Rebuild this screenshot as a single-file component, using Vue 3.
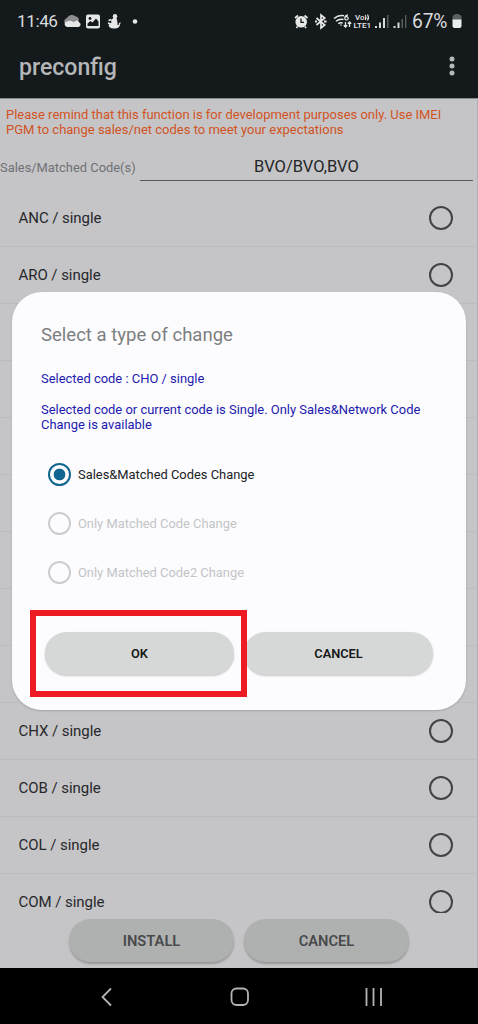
<script setup>
const topRows = ['ANC / single', 'ARO / single']
const bottomRows = ['CHX / single', 'COB / single', 'COL / single', 'COM / single']
const rows = [...topRows, ...Array(7).fill(''), ...bottomRows]
const options = [
  { label: 'Sales&Matched Codes Change', selected: true },
  { label: 'Only Matched Code Change', selected: false },
  { label: 'Only Matched Code2 Change', selected: false },
]
</script>

<template>
  <div class="phone">
    <header class="top">
      <div class="status">
        <span class="clock">11:46</span>
        <svg class="left-icons" width="80" height="20" viewBox="0 0 80 20">
          <path d="M1.500 13a4 4 0 0 1 2.500-5a5.500 5 0 0 1 9-1.500a4 4 0 0 1 3 4l-9 2.500z" fill="#8c8f90" />
          <path d="M4 17a3 3 0 0 1-1.500-5L7 10.500l3.500 1.500 3-1.500a3 3 0 0 1 2.800 2a2.400 2.400 0 0 1-.8 4.500z" fill="#e6e8e8" />
          <rect x="23" y="4.500" width="14" height="14" rx="2" fill="#e6e8e8" />
          <circle cx="27" cy="8.500" r="1.400" fill="#14191c" />
          <path d="M24.500 16v-2.500l3-2.500 2 1.500 3.500-4 2.500 3V16z" fill="#14191c" />
          <circle cx="52" cy="6.300" r="2.200" fill="#e6e8e8" />
          <path d="M50.500 8c-2 1-3 3-2 4.500l-3 2.500c.5 2.800 3 3.800 6 3.500c3 0 5.300-1 5.500-4.200l1-1.800-2.200.5.300 1.600-1.600.4c.2-3-.5-5-1-7z" fill="#e6e8e8" />
          <path d="M45.500 10.500l3-1M45 13l3 1" stroke="#e6e8e8" stroke-width="1.800" />
          <circle cx="72" cy="11.500" r="2.300" fill="#e6e8e8" />
        </svg>
        <svg class="right-icons" width="118" height="20" viewBox="294 10 118 20">
          <g fill="none" stroke="#e6e8e8">
            <circle cx="301.200" cy="21.800" r="5.800" fill="#e6e8e8" stroke="none" />
            <path d="M295 18l3-2.500M304.500 15.500l3 2.500M297.500 26.500l-1 1.500M305 26.500l1 1.500" stroke-width="1.700" />
            <path d="M301 18.500v3.800h3" stroke="#14191c" stroke-width="1.300" />
            <path d="M316.500 18l8.200 7-3.700 3V15l3.700 3-8.200 7" stroke-width="1.700" />
            <path d="M315 21.500h2M324 21.500h2.600" stroke-width="2" />
            <path d="M334 18.500c3.500-3 7-3.500 10-2.700M336 21.300c2.500-2.200 5-2.500 7.500-1.800M338.300 23.700c1.500-1.300 3-1.300 4.500-.6" stroke-width="1.500" />
            <circle cx="341" cy="25" r=".8" fill="#e6e8e8" stroke="none" />
            <path d="M348 14.800c-2.300.3-3.200 1.500-3.200 3.300a1.700 1.700 0 1 0 .5-1" stroke-width="1.200" />
            <path d="M345.500 22v5M343.800 25.300l1.700 1.700 1.700-1.700M349.500 27v-5M347.800 23.700l1.700-1.700 1.700 1.700" stroke-width="1.300" />
            <path d="M365.300 15q1.500 2.500 0 5M367.500 14.500q2 3 0 6" stroke-width="1.100" />
          </g>
          <g class="net" fill="#e6e8e8">
            <text x="355" y="20" textLength="9.500" lengthAdjust="spacingAndGlyphs" font-size="7.500">Vo</text>
            <text x="353.600" y="28.300" textLength="17.500" lengthAdjust="spacingAndGlyphs" font-size="7.500">LTE1</text>
          </g>
          <g fill="#d7dada">
            <path d="M375 26h2v2h-2zM379 22.500h2v5.500h-2zM383 18h2v10h-2z" />
            <path d="M387 15h1.500v13H387zM401.500 19h1.500v9h-1.500zM405 15h1.300v13h-1.300z" fill="#5a5e60" />
            <path d="M393.500 26h2v2h-2zM397.500 22.500h2v5.500h-2z" />
          </g>
        </svg>
        <span class="percent">67%</span>
        <svg class="battery" width="10" height="16" viewBox="0 0 10 16">
          <path d="M3 1h4v1h1a1.500 1.500 0 0 1 1.500 1.500V7H.5V3.500A1.500 1.500 0 0 1 2 2h1z" fill="#5b6062" />
          <path d="M.5 6.500h9V13A2 2 0 0 1 7.500 15h-5A2 2 0 0 1 .5 13z" fill="#eceeee" />
        </svg>
      </div>
      <div class="bar">
        <h1>preconfig</h1>
        <svg width="8" height="22" viewBox="0 0 8 22" fill="#b6b8ba">
          <circle cx="4" cy="3" r="2.500" /><circle cx="4" cy="10" r="2.500" /><circle cx="4" cy="17" r="2.500" />
        </svg>
      </div>
    </header>

    <main class="content">
      <p class="warning">Please remind that this function is for development purposes only. Use IMEI<br>PGM to change sales/net codes to meet your expectations</p>
      <div class="field">
        <label>Sales/Matched Code(s)</label>
        <div class="value">BVO/BVO,BVO</div>
      </div>
      <div class="list">
        <div v-for="(row, i) in rows" :key="i" class="row">
          <template v-if="row">
            <span>{{ row }}</span>
            <i class="ring"></i>
          </template>
        </div>
      </div>
      <div class="actions">
        <button class="main-btn">INSTALL</button>
        <button class="main-btn">CANCEL</button>
      </div>
    </main>

    <nav class="nav">
      <svg width="478" height="56" viewBox="0 0 478 56" fill="none" stroke="#b4b4b4" stroke-width="1.800">
        <path d="M111 20.500l-8.500 8.500 8.500 8.500" />
        <rect x="231.500" y="20.500" width="16.500" height="16.500" rx="5" />
        <path d="M366.500 20v18M373.500 20v18M381 20v18" />
      </svg>
    </nav>

    <section class="dialog">
      <h2>Select a type of change</h2>
      <p class="info first">Selected code : CHO / single</p>
      <p class="info">Selected code or current code is Single. Only Sales&amp;Network Code<br>Change is available</p>
      <div class="options">
        <div v-for="o in options" :key="o.label" class="option" :class="{ selected: o.selected }">
          <i class="radio"></i><span>{{ o.label }}</span>
        </div>
      </div>
      <div class="buttons">
        <button>OK</button>
        <button>CANCEL</button>
      </div>
    </section>
    <div class="highlight"></div>
  </div>
</template>

<style>
body { margin: 0; background: #000; }
</style>

<style scoped>
* { box-sizing: border-box; }
.phone {
  position: relative;
  width: 478px;
  height: 1024px;
  overflow: hidden;
  display: flex;
  flex-direction: column;
  background: #c5c5c7;
  font-family: Roboto, "Noto Sans", sans-serif;
  white-space: nowrap;
}
h1, h2, p { margin: 0; font-weight: 400; }
button { border: 0; padding: 0; font-family: inherit; }
.top { height: 98px; flex: none; background: #14191c; }
.status { display: flex; height: 40px; padding: 3px 0 0 17px; align-items: center; color: #d9dbdc; }
.clock { width: 46px; margin-top: -1px; font-size: 17.200px; letter-spacing: -0.450px; }
.left-icons { margin-top: -3px; }
.right-icons { margin: -3px 0 0 151px; }
.net { font-family: Roboto, sans-serif; font-weight: 500; }
.percent { width: 40px; margin-top: -1px; font-size: 19.300px; letter-spacing: -0.200px; }
.battery { flex: none; margin-top: -1px; }
.bar { display: flex; height: 54px; padding: 0 22px 0 19px; align-items: center; justify-content: space-between; }
h1 { font-size: 23.100px; font-weight: 500; color: #b4b6b8; }
.content { height: 870px; flex: none; border-top: 1px solid #8b8b8d; border-right: 1px solid #b2b2b4; overflow: hidden; }
.warning { padding: 8px 0 0 6px; font-size: 12.990px; line-height: 15.300px; color: #d2531f; }
.field { display: flex; height: 43.400px; align-items: flex-end; }
.field label { width: 140px; padding-bottom: 6px; font-size: 12.900px; color: #6f7074; }
.value { width: 333px; height: 31px; border-bottom: 1px solid #58595c; text-align: center; font-size: 16.500px; line-height: 34px; color: #242629; }
.list { height: 724px; padding-top: 0.600px; margin-top: 8px; overflow: hidden; }
.row { display: flex; height: 57.050px; padding: 0 24px 0 18.500px; align-items: center; justify-content: space-between; border-bottom: 1px solid #bcbcbe; font-size: 15px; letter-spacing: -0.050px; color: #27282b; }
.ring { width: 24px; height: 24px; border: 2px solid #414347; border-radius: 50%; }
.actions { display: flex; padding: 6px 0 0 69px; gap: 10px; }
.main-btn { width: 165px; height: 43px; padding-top: 1px; border-radius: 22px; background: #afb1b0; box-shadow: 0 2px 2px #98999a; color: #48494b; font-size: 14.700px; font-weight: 600; }
.nav { height: 56px; background: #000; }
.nav svg { display: block; }
.dialog {
  position: absolute;
  left: 12px;
  top: 292px;
  width: 454px;
  height: 418px;
  padding: 31px 29px;
  border-radius: 30px;
  background: #fcfcfe;
  box-shadow: 0 1px 2px #a3a3a5;
}
h2 { font-size: 18.550px; line-height: 24px; color: #7d7f81; }
.info { font-size: 12.940px; line-height: 15.300px; color: #2219ae; }
.info.first { margin: 24px 0 15.300px; }
.options { margin-top: 17.700px; }
.option { display: flex; height: 49px; padding-left: 7px; align-items: center; gap: 7px; font-size: 12.900px; color: #c3c4c6; }
.option.selected { color: #202124; }
.radio { width: 23px; height: 23px; border: 2px solid #cdcdcf; border-radius: 50%; }
.selected .radio { border-color: #10668f; background: radial-gradient(circle, #10668f 5.500px, transparent 6.200px); }
.buttons { display: flex; gap: 10px; margin: 35px 0 0 4px; }
.buttons button { width: 189px; height: 43px; flex: none; border-radius: 22px; background: #d6d8d7; box-shadow: 0 1px 2px #c4c5c6; color: #161819; font-size: 12.800px; font-weight: 600; }
.highlight { position: absolute; left: 30px; top: 610px; width: 217px; height: 87px; border: 6px solid #ee1b24; }
</style>
